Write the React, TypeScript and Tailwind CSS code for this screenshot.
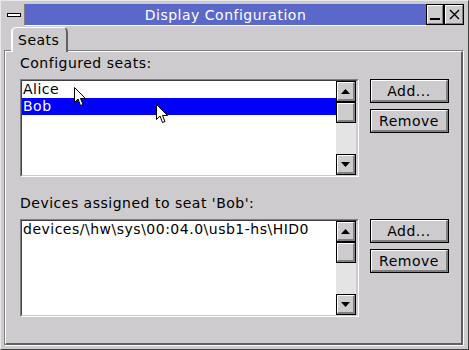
import React from 'react'

const font = { fontFamily: '"DejaVu Sans", sans-serif' }

function Arrow({ down }: { down?: boolean }) {
  return (
    <svg width="9" height="5" viewBox="0 0 9 5">
      {down ? <polygon points="0,0 9,0 4.5,5" fill="#000" /> : <polygon points="0,5 9,5 4.5,0" fill="#000" />}
    </svg>
  )
}

function SBtn({ children, h = 'h-[21px]' }: { children?: React.ReactNode; h?: string }) {
  return (
    <div className={`${h} border border-black bg-[#cdcbcd]`}>
      <div className="h-full border-t border-l border-white border-r-2 border-b-2 border-r-[#808080] border-b-[#808080] flex items-center justify-center">
        {children}
      </div>
    </div>
  )
}

function Scrollbar() {
  return (
    <div className="w-[20px] flex flex-col shrink-0 bg-[#e4e4e4]">
      <SBtn><Arrow /></SBtn>
      <SBtn />
      <div className="flex-1" />
      <SBtn><Arrow down /></SBtn>
    </div>
  )
}

function Button({ label }: { label: string }) {
  return (
    <div className="w-[79px] h-[24px] border border-black bg-[#cdcbcd]">
      <div className="h-full border-t border-l border-white border-r-2 border-b-2 border-r-[#808080] border-b-[#808080] flex items-center justify-center text-[14px] leading-none text-black">
        {label}
      </div>
    </div>
  )
}

function ListBox({ children }: { children: React.ReactNode }) {
  return (
    <div className="w-[339px] h-[98px] border-t border-l border-[#808080] border-r border-b border-r-white border-b-white">
      <div className="h-full flex border-t border-l border-[#404040] border-r-2 border-b border-r-[#cdcbcd] border-b-[#cdcbcd] bg-white">
        <div className="flex-1 overflow-hidden">{children}</div>
        <Scrollbar />
      </div>
    </div>
  )
}

function Cursor({ className }: { className: string }) {
  return (
    <svg className={`absolute ${className}`} width="12" height="20" viewBox="0 0 12 20">
      <path d="M0.5 0.5 L0.5 15.5 L4 12 L6.5 18.5 L9 17.5 L6.5 11.5 L11.5 11.5 Z" fill="#fff" stroke="#000" strokeWidth="1" />
    </svg>
  )
}

export default function App() {
  return (
    <div className="w-[469px] h-[350px] bg-[#cdcbcd] border border-t-[#e8e8e8] border-l-[#e8e8e8] border-r-[#404040] border-b-[#404040] p-[3px] flex flex-col relative tracking-[0.5px]" style={font}>
      {/* Title bar */}
      <div className="flex h-[22px]">
        <div className="w-[21px] h-[21px] border-r border-[#808080] flex items-center justify-center">
          <div className="w-[14px] h-[4px] border border-black bg-white" />
        </div>
        <div className="flex-1 bg-[#5a69c9] border-b border-white flex items-center justify-center text-white text-[14px] leading-none">
          Display Configuration
        </div>
        <div className="w-[18px] h-[21px] border border-black bg-[#cdcbcd]">
          <div className="h-full border-t border-l border-white border-r border-b border-r-[#808080] border-b-[#808080] flex items-end justify-center pb-[3px]">
            <div className="w-[10px] h-[2px] bg-black" />
          </div>
        </div>
        <div className="w-[20px] h-[21px] border border-black bg-[#cdcbcd]">
          <div className="h-full border-t border-l border-white border-r border-b border-r-[#808080] border-b-[#808080] flex items-center justify-center">
            <svg width="11" height="11" viewBox="0 0 11 11">
              <path d="M1 1 L10 10 M10 1 L1 10" stroke="#000" strokeWidth="1.4" />
            </svg>
          </div>
        </div>
        <div className="w-[1px]" />
      </div>

      {/* Tab */}
      <div className="relative z-10 mt-[1px] ml-[7px] -mb-[2px] w-[57px] h-[25px] bg-[#cdcbcd] border-t border-l-2 border-white border-r-2 border-r-[#606060] rounded-t-[5px] flex items-center pl-[5px] text-[14px] text-black">
        Seats
      </div>

      {/* Panel */}
      <div className="flex-1 border-t border-l border-[#808080] border-r border-b border-r-white border-b-white mr-[1px]">
        <div className="h-full border-t border-l border-white border-r-2 border-b-2 border-r-[#606060] border-b-[#606060] pl-[14px] pt-[3px] text-[14px] leading-[17px] text-black">
          <div>Configured seats:</div>
          <div className="flex gap-[11px] mt-[7px]">
            <ListBox>
              <div className="h-[17px] pl-[1px]">Alice</div>
              <div className="h-[17px] pl-[1px] bg-[#0000ff] text-white">Bob</div>
            </ListBox>
            <div className="flex flex-col gap-[6px]">
              <Button label="Add..." />
              <Button label="Remove" />
            </div>
          </div>
          <div className="mt-[18px]">Devices assigned to seat 'Bob':</div>
          <div className="flex gap-[11px] mt-[7px]">
            <ListBox>
              <div className="h-[17px] pl-[1px] whitespace-nowrap">devices/\hw\sys\00:04.0\usb1-hs\HID0</div>
            </ListBox>
            <div className="flex flex-col gap-[6px]">
              <Button label="Add..." />
              <Button label="Remove" />
            </div>
          </div>
        </div>
      </div>

      <Cursor className="left-[73px] top-[86px]" />
      <Cursor className="left-[155px] top-[103px]" />
    </div>
  )
}
